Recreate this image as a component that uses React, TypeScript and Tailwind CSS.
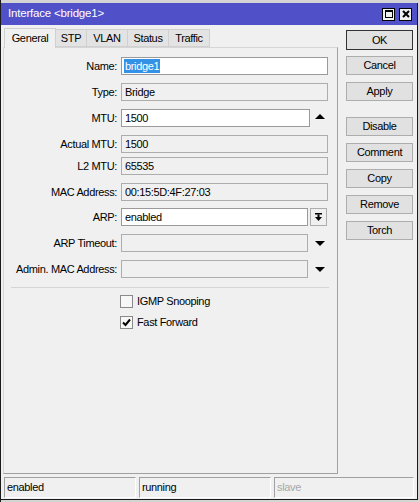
import React from 'react';

type Row = {
  label: string;
  value: string;
  kind: 'edit' | 'ro';
  extra?: 'up' | 'down' | 'btn';
  mt: string;
  selected?: boolean;
};

const ROWS: Row[] = [
  { label: 'Name:', value: 'bridge1', kind: 'edit', mt: 'mt-[9px]', selected: true },
  { label: 'Type:', value: 'Bridge', kind: 'ro', mt: 'mt-[8px]' },
  { label: 'MTU:', value: '1500', kind: 'edit', extra: 'up', mt: 'mt-[8px]' },
  { label: 'Actual MTU:', value: '1500', kind: 'ro', mt: 'mt-[8px]' },
  { label: 'L2 MTU:', value: '65535', kind: 'ro', mt: 'mt-[4px]' },
  { label: 'MAC Address:', value: '00:15:5D:4F:27:03', kind: 'ro', mt: 'mt-[8px]' },
  { label: 'ARP:', value: 'enabled', kind: 'edit', extra: 'btn', mt: 'mt-[7px]' },
  { label: 'ARP Timeout:', value: '', kind: 'ro', extra: 'down', mt: 'mt-[8px]' },
  { label: 'Admin. MAC Address:', value: '', kind: 'ro', extra: 'down', mt: 'mt-[8px]' },
];

const TABS = [
  { name: 'General', w: 'w-[52px]' },
  { name: 'STP', w: 'w-[31px]' },
  { name: 'VLAN', w: 'w-[41px]' },
  { name: 'Status', w: 'w-[41px]' },
  { name: 'Traffic', w: 'w-[41px]' },
];

const BUTTONS = [
  { name: 'OK', mt: 'mt-0', def: true },
  { name: 'Cancel', mt: 'mt-[6px]' },
  { name: 'Apply', mt: 'mt-[7px]' },
  { name: 'Disable', mt: 'mt-[16px]' },
  { name: 'Comment', mt: 'mt-[7px]' },
  { name: 'Copy', mt: 'mt-[7px]' },
  { name: 'Remove', mt: 'mt-[7px]' },
  { name: 'Torch', mt: 'mt-[7px]' },
];

function Tri({ up }: { up?: boolean }) {
  return (
    <svg width="10" height="5" viewBox="0 0 10 5" aria-hidden>
      {up ? <polygon points="0,5 10,5 5,0" fill="#000" /> : <polygon points="0,0 10,0 5,5" fill="#000" />}
    </svg>
  );
}

function Field({ row }: { row: Row }) {
  const full = !row.extra;
  const width = full ? 'w-[207px]' : row.extra === 'up' ? 'w-[189px]' : 'w-[187px]';
  return (
    <div className={`flex items-center h-[18px] ${row.mt}`}>
      <div className="w-[117px] pr-[4px] text-right text-[#000] whitespace-nowrap">{row.label}</div>
      <div
        className={`${width} h-[18px] flex items-center pl-[2px] border ${
          row.kind === 'edit' ? 'bg-white border-[#9a9a9a]' : 'bg-[#f0f0f0] border-[#adadad]'
        }`}
      >
        {row.selected ? (
          <span className="bg-[#3392e6] text-white px-[1px] leading-[14px]">{row.value}</span>
        ) : (
          <span className="pl-[1px]">{row.value}</span>
        )}
      </div>
      {row.extra === 'up' && (
        <div className="w-[18px] flex justify-center items-center -mt-[3px] ml-[1px]">
          <Tri up />
        </div>
      )}
      {row.extra === 'down' && (
        <div className="w-[18px] flex justify-center items-center ml-[3px]">
          <Tri />
        </div>
      )}
      {row.extra === 'btn' && (
        <div className="ml-[2px] w-[17px] h-[18px] border border-[#adadad] bg-[#f0f0f0] flex items-center justify-center">
          <svg width="7" height="8" viewBox="0 0 7 8" aria-hidden>
            <rect x="0" y="0" width="7" height="1.5" fill="#000" />
            <rect x="2.5" y="1.5" width="2" height="3" fill="#000" />
            <polygon points="0,4 7,4 3.5,8" fill="#000" />
          </svg>
        </div>
      )}
    </div>
  );
}

function Check({ label, checked, mt }: { label: string; checked?: boolean; mt: string }) {
  return (
    <div className={`flex items-center h-[13px] ml-[116px] ${mt}`}>
      <div className="w-[13px] h-[13px] border border-[#8a8a8a] bg-[#f7f7f7] flex items-center justify-center">
        {checked && (
          <svg width="9" height="9" viewBox="0 0 9 9" aria-hidden>
            <polyline points="1,4.5 3.5,7 8,1.5" fill="none" stroke="#000" strokeWidth="2" />
          </svg>
        )}
      </div>
      <span className="ml-[4px]">{label}</span>
    </div>
  );
}

export default function App() {
  return (
    <div className="w-[419px] h-[502px] bg-[#d4d4d4] border-l border-[#1a1a1a] pt-[3px] pb-[2px] pr-[1px] font-['Liberation_Sans',Arial,sans-serif] text-[11px] tracking-[-0.35px] text-black overflow-hidden">
      <div className="h-full flex flex-col bg-[#f0f0f0] border-r border-b border-[#1a1a1a]">
        {/* タイトルバー */}
        <div className="h-[22px] bg-[#5050c8] flex items-center pl-[7px] pr-[5px] text-white text-[11.5px] tracking-[-0.2px]">
          <span className="flex-1">{'Interface <bridge1>'}</span>
          <div className="flex gap-[4px]">
            <div className="w-[13px] h-[13px] bg-[#f0f0f0] border border-black flex items-center justify-center">
              <div className="w-[8px] h-[8px] border border-black border-t-2" />
            </div>
            <div className="w-[13px] h-[13px] bg-[#f0f0f0] border border-black flex items-center justify-center">
              <svg width="8" height="8" viewBox="0 0 8 8" aria-hidden>
                <path d="M1 1 L7 7 M7 1 L1 7" stroke="#000" strokeWidth="2" />
              </svg>
            </div>
          </div>
        </div>

        <div className="flex-1 flex pt-[2px] min-h-0">
          {/* 左: タブ + パネル */}
          <div className="ml-[2px] w-[335px] flex flex-col">
            <div className="h-[20px] flex items-end pl-[1px]">
              {TABS.map((t, i) =>
                i === 0 ? (
                  <div
                    key={t.name}
                    className={`${t.w} h-[20px] bg-[#f0f0f0] border border-b-0 border-[#d0d0d0] flex items-center justify-center -mb-px relative z-10`}
                  >
                    {t.name}
                  </div>
                ) : (
                  <div
                    key={t.name}
                    className={`${t.w} h-[18px] bg-[#e3e3e3] border border-l-0 border-[#d0d0d0] flex items-center justify-center`}
                  >
                    {t.name}
                  </div>
                )
              )}
            </div>
            <div className="flex-1 border-t border-l border-[#d6d6d6] border-r border-b border-r-[#a0a0a0] border-b-[#a0a0a0]">
              {ROWS.map((r) => (
                <Field key={r.label} row={r} />
              ))}
              <div className="mt-[9px] ml-[7px] w-[318px] h-px bg-[#d5d5d5]" />
              <Check label="IGMP Snooping" mt="mt-[7px]" />
              <Check label="Fast Forward" checked mt="mt-[8px]" />
            </div>
          </div>

          {/* 右: ボタン列 */}
          <div className="ml-[8px] w-[67px] pt-[3px] flex flex-col">
            {BUTTONS.map((b) => (
              <div
                key={b.name}
                className={`${b.mt} ${b.def ? 'h-[20px] border-[#333]' : 'h-[19px] border-[#adadad]'} border bg-[#e1e1e1] flex items-center justify-center`}
              >
                {b.name}
              </div>
            ))}
          </div>
        </div>

        {/* ステータスバー */}
        <div className="mt-[3px] h-[21px] mx-[3px] mb-[1px] flex gap-[3px]">
          <div className="w-[132px] border border-[#a0a0a0] border-b-white border-r-white flex items-center pl-[2px]">
            enabled
          </div>
          <div className="w-[132px] border border-[#a0a0a0] border-b-white border-r-white flex items-center pl-[2px]">
            running
          </div>
          <div className="flex-1 border border-[#a0a0a0] border-b-white border-r-white flex items-center pl-[2px] text-[#a8a8a8]">
            slave
          </div>
        </div>
      </div>
    </div>
  );
}
